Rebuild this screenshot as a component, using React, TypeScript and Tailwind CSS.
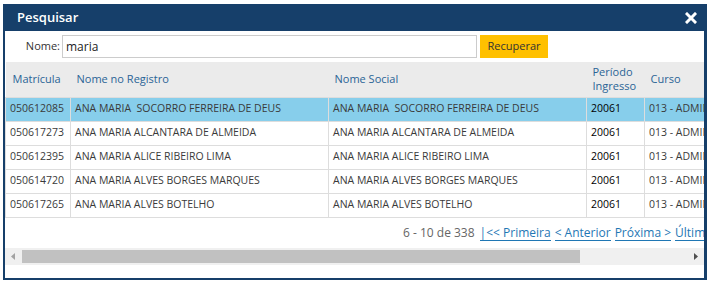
import React from "react";

const rows = [
  ["050612085", "ANA MARIA  SOCORRO FERREIRA DE DEUS", "20061", "013 - ADMINISTRAÇÃO"],
  ["050617273", "ANA MARIA ALCANTARA DE ALMEIDA", "20061", "013 - ADMINISTRAÇÃO"],
  ["050612395", "ANA MARIA ALICE RIBEIRO LIMA", "20061", "013 - ADMINISTRAÇÃO"],
  ["050614720", "ANA MARIA ALVES BORGES MARQUES", "20061", "013 - ADMINISTRAÇÃO"],
  ["050617265", "ANA MARIA ALVES BOTELHO", "20061", "013 - ADMINISTRAÇÃO"],
];

export default function App() {
  return (
    <div className="w-[709px] h-[285px] bg-white pt-[4px] pl-[3px]" style={{ fontFamily: '"Open Sans", "Noto Sans", sans-serif' }}>
      <div className="w-[704px] h-[276px] border-l-2 border-r-[3px] border-b-2 border-[#163f6a] flex flex-col">
        <div className="h-[27px] bg-[#163f6a] flex items-center justify-between pl-[12px] pr-[6px]">
          <span className="text-white text-[13px] font-semibold leading-none">Pesquisar</span>
          <svg width="12" height="12" viewBox="0 0 12 12" className="mr-[1px]">
            <path d="M2 2 L10 10 M10 2 L2 10" stroke="white" strokeWidth="3" strokeLinecap="square" />
          </svg>
        </div>
        <div className="h-[31px] flex items-center pl-[20px]">
          <span className="text-[11px] text-[#333] w-[35px] text-right mr-[2px]">Nome:</span>
          <div className="w-[415px] h-[23px] border border-[#ccc] flex items-center pl-[3px] text-[12px] text-[#222]">maria</div>
          <div className="ml-[3px] w-[68px] h-[23px] bg-[#ffc000] flex items-center justify-center text-[11px] text-[#333]">Recuperar</div>
        </div>
        <div className="w-[699px] overflow-hidden flex-1 flex flex-col">
          <div className="w-[950px]">
            <table className="table-fixed border-collapse text-[10.5px]">
              <colgroup>
                <col className="w-[65px]" />
                <col className="w-[258px]" />
                <col className="w-[258px]" />
                <col className="w-[58px]" />
                <col className="w-[300px]" />
              </colgroup>
              <thead>
                <tr className="h-[35px] bg-[#ebebeb] text-[#2a6496] text-[11px] leading-[14px]">
                  <th className="font-normal text-left pl-[7px]">Matrícula</th>
                  <th className="font-normal text-left pl-[6px]">Nome no Registro</th>
                  <th className="font-normal text-left pl-[6px]">Nome Social</th>
                  <th className="font-normal text-left pl-[6px]">Período<br />Ingresso</th>
                  <th className="font-normal text-left pl-[6px]">Curso</th>
                </tr>
              </thead>
              <tbody>
                {rows.map((r, i) => (
                  <tr key={i} className={`h-[24px] ${i === 0 ? "bg-[#87ceeb]" : "bg-white"} text-[#3a3a3a]`}>
                    <td className="border border-[#ddd] pl-[4px] whitespace-pre">{r[0]}</td>
                    <td className="border border-[#ddd] pl-[4px] whitespace-pre">{r[1]}</td>
                    <td className="border border-[#ddd] pl-[4px] whitespace-pre">{r[1]}</td>
                    <td className="border border-[#ddd] pl-[4px] text-black">{r[2]}</td>
                    <td className="border border-[#ddd] pl-[4px] whitespace-nowrap">{r[3]}</td>
                  </tr>
                ))}
              </tbody>
            </table>
            <div className="h-[30px] flex items-center pl-[398px] text-[12px] whitespace-nowrap">
              <span className="text-[#666] mr-[5px]">6 - 10 de 338</span>
              <span className="text-[#1f77b4] border-b border-[#1f77b4] leading-[15px] mr-[4px]">|&lt;&lt; Primeira</span>
              <span className="text-[#1f77b4] border-b border-[#1f77b4] leading-[15px] mr-[4px]">&lt; Anterior</span>
              <span className="text-[#1f77b4] border-b border-[#1f77b4] leading-[15px] mr-[4px]">Próxima &gt;</span>
              <span className="text-[#1f77b4] border-b border-[#1f77b4] leading-[15px]">Última &gt;&gt;|</span>
            </div>
          </div>
          <div className="h-[17px] bg-[#f0f0f0] flex items-center">
            <svg width="17" height="17" viewBox="0 0 17 17" className="shrink-0">
              <path d="M6 8.5 L10 5 L10 12 Z" fill="#a3a3a3" />
            </svg>
            <div className="h-[13px] bg-[#c1c1c1] w-[558px]"></div>
            <div className="flex-1"></div>
            <svg width="17" height="17" viewBox="0 0 17 17" className="shrink-0">
              <path d="M11 8.5 L7 5 L7 12 Z" fill="#505050" />
            </svg>
          </div>
          <div className="h-[14px]"></div>
        </div>
      </div>
    </div>
  );
}
